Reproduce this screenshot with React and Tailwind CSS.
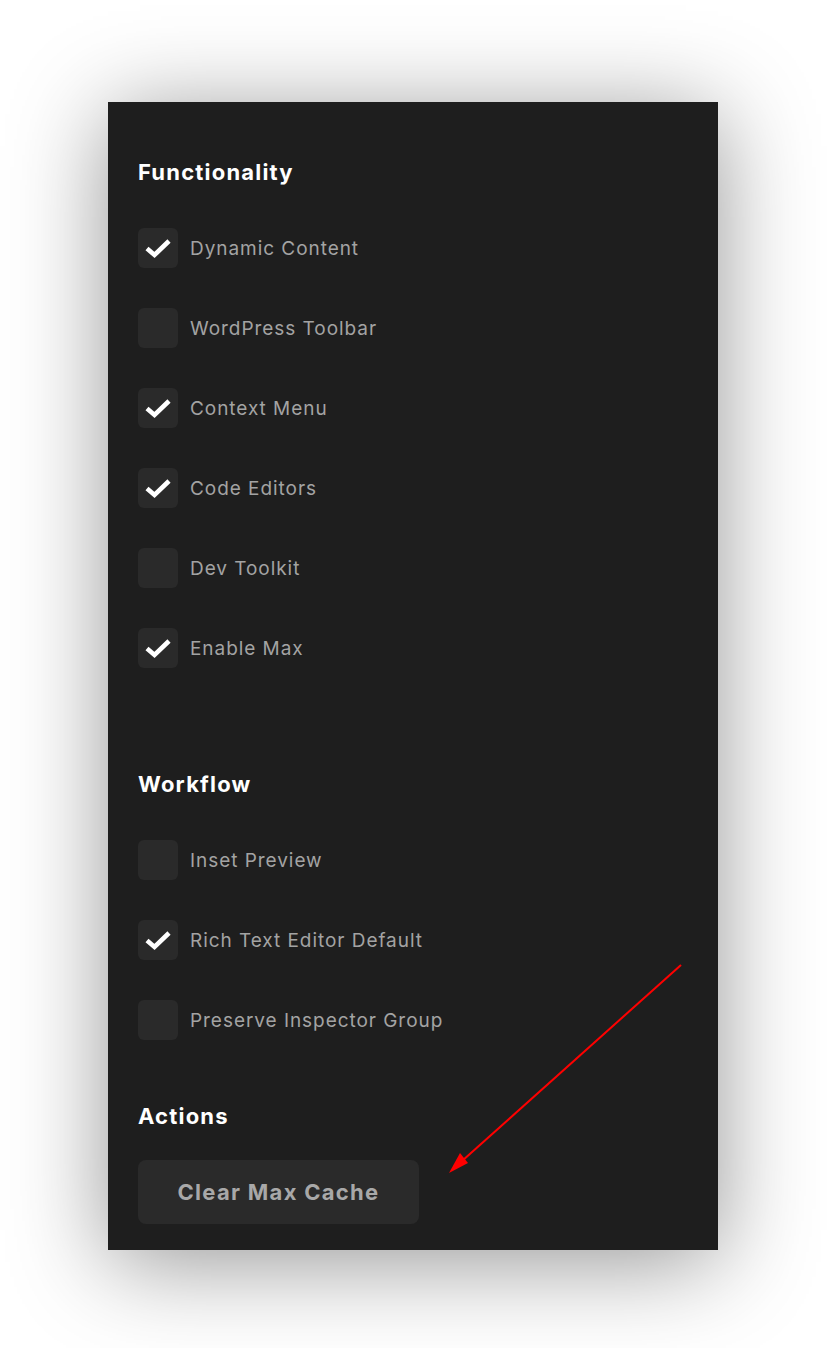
import React from 'react';

const functionality = [
  { label: 'Dynamic Content', checked: true },
  { label: 'WordPress Toolbar', checked: false },
  { label: 'Context Menu', checked: true },
  { label: 'Code Editors', checked: true },
  { label: 'Dev Toolkit', checked: false },
  { label: 'Enable Max', checked: true },
];

const workflow = [
  { label: 'Inset Preview', checked: false },
  { label: 'Rich Text Editor Default', checked: true },
  { label: 'Preserve Inspector Group', checked: false },
];

const CheckRow = ({ label, checked }) => (
  <label className="flex items-center gap-3 h-10 cursor-pointer">
    <span className="w-10 h-10 rounded-md bg-[#2a2a2a] flex items-center justify-center shrink-0">
      {checked && (
        <svg width="40" height="40" viewBox="0 0 40 40">
          <path
            d="M9 20.5 L16.5 27 L31 13"
            fill="none"
            stroke="#ffffff"
            strokeWidth="4.6"
            strokeLinecap="butt"
            strokeLinejoin="miter"
          />
        </svg>
      )}
    </span>
    <span className="text-[19px] leading-6 text-[#a3a3a3] tracking-[0.95px] pt-[2px]">{label}</span>
  </label>
);

const Heading = ({ children }) => (
  <h2 className="text-[22px] leading-7 font-bold text-white tracking-[1.2px]">{children}</h2>
);

export default function App() {
  return (
    <div className="relative min-h-[1348px] bg-white" style={{ fontFamily: 'Inter, "Noto Sans", sans-serif' }}>
      <div className="pt-[102px] pl-[108px]">
        <div className="w-[610px] h-[1148px] bg-[#1e1e1e] shadow-[0_12px_90px_rgba(0,0,0,0.42)] px-[30px] pt-14">
          <Heading>Functionality</Heading>
          <div className="mt-[42px] flex flex-col gap-10">
            {functionality.map((o) => (
              <CheckRow key={o.label} {...o} />
            ))}
          </div>

          <div className="mt-[102px]">
            <Heading>Workflow</Heading>
          </div>
          <div className="mt-[42px] flex flex-col gap-10">
            {workflow.map((o) => (
              <CheckRow key={o.label} {...o} />
            ))}
          </div>

          <div className="mt-[62px]">
            <Heading>Actions</Heading>
          </div>
          <button className="mt-[30px] w-[281px] h-16 rounded-lg bg-[#2a2a2a] text-[22px] font-bold text-[#a8a8a8] tracking-[1.3px]">
            Clear Max Cache
          </button>
        </div>
      </div>

      {/* annotation arrow */}
      <svg className="absolute left-0 top-0 pointer-events-none" width="832" height="1348">
        <line x1="681" y1="965" x2="462" y2="1161" stroke="#ff0000" strokeWidth="2" />
        <polygon points="449,1173 460,1153 468,1163" fill="#ff0000" />
      </svg>
    </div>
  );
}
